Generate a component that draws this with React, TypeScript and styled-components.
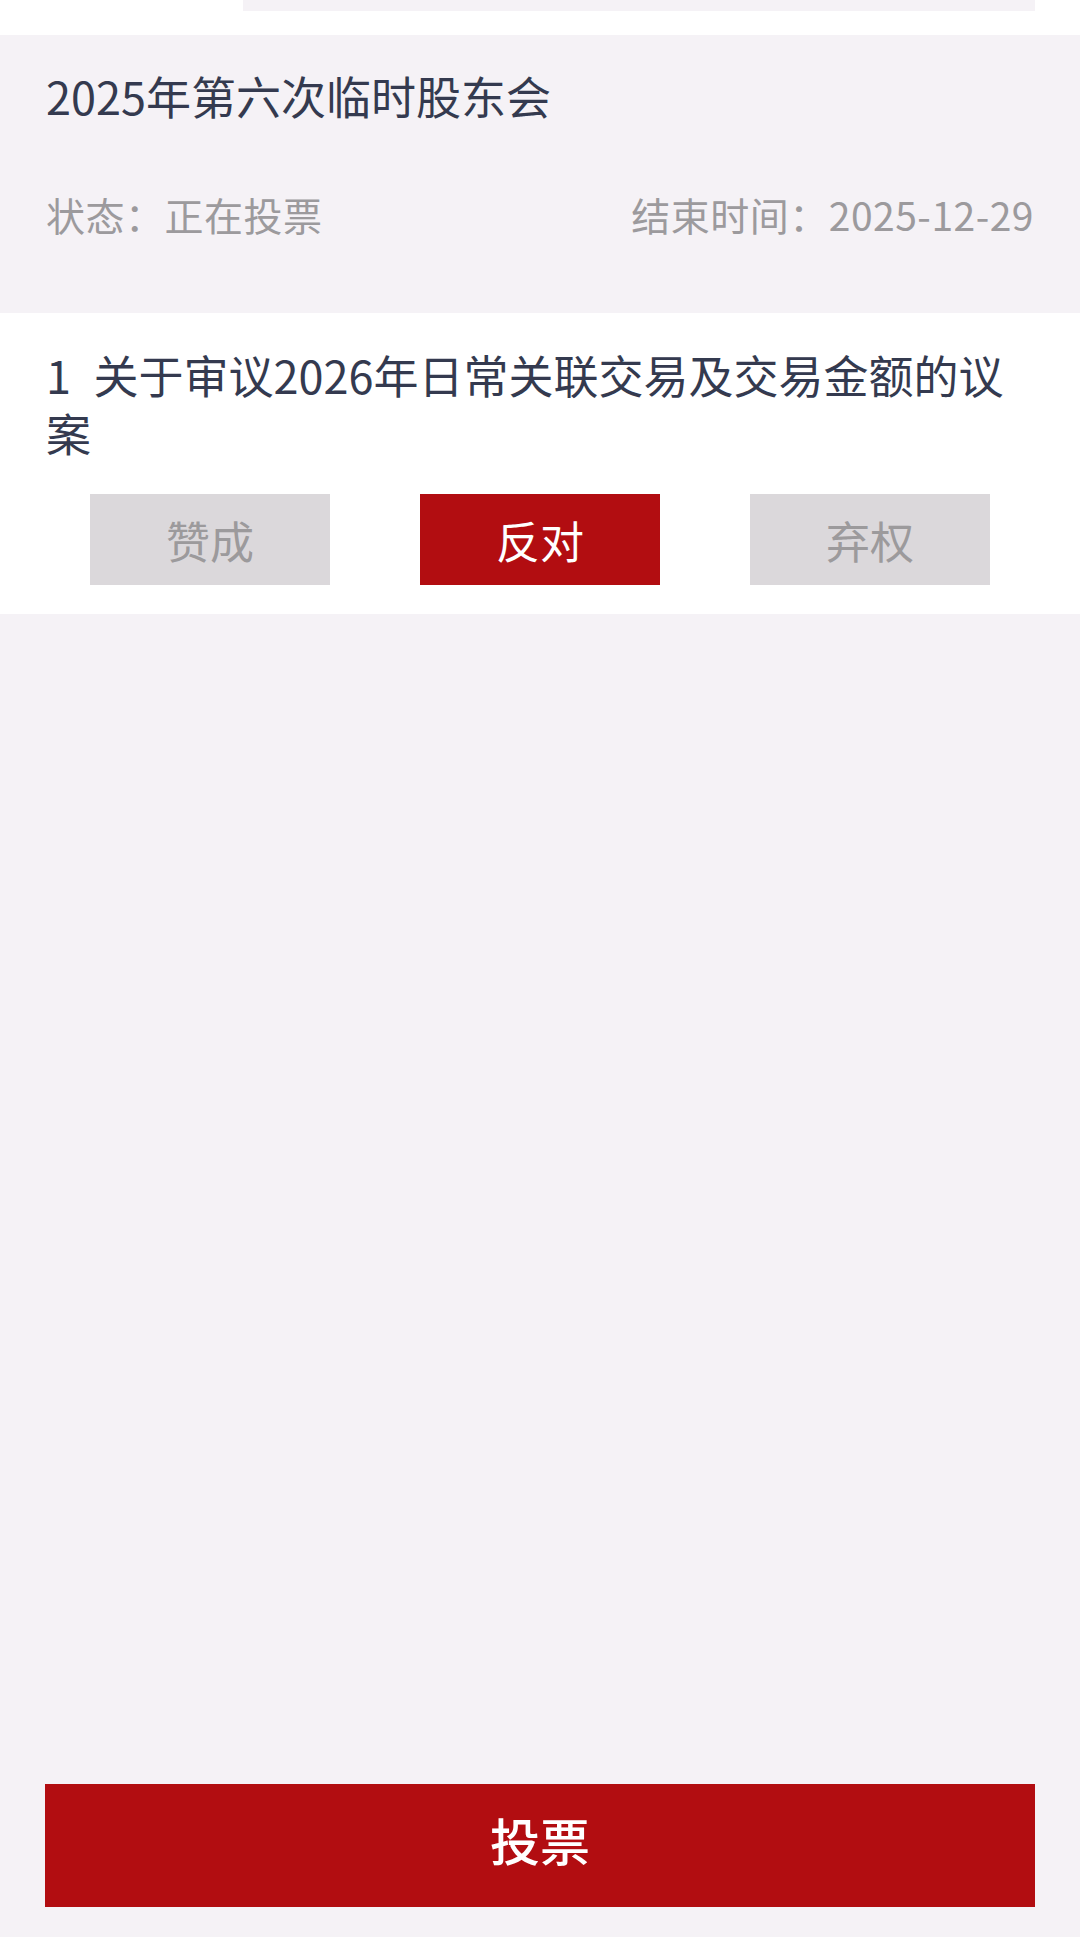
import React, { useState } from "react";
import styled, { createGlobalStyle } from "styled-components";

const GlobalStyle = createGlobalStyle`
  body {
    margin: 0;
    background: #f5f2f6;
    font-family: "Noto Sans CJK SC", "Noto Sans", sans-serif;
  }
`;

type Choice = "agree" | "against" | "abstain";

const options: { key: Choice; label: string }[] = [
  { key: "agree", label: "赞成" },
  { key: "against", label: "反对" },
  { key: "abstain", label: "弃权" },
];

const App = () => {
  const [choice, setChoice] = useState<Choice>("against");

  return (
    <Page>
      <GlobalStyle />
      <TopBar>
        <TopBox />
      </TopBar>
      <MeetingCard>
        <Title>2025年第六次临时股东会</Title>
        <StatusRow>
          <span>状态：正在投票</span>
          <span>结束时间：2025-12-29</span>
        </StatusRow>
      </MeetingCard>
      <Proposal>
        <ProposalText>
          {"1\u2002关于审议2026年日常关联交易及交易金额的议案"}
        </ProposalText>
        <OptionRow>
          {options.map((item) => (
            <OptionButton
              key={item.key}
              $active={choice === item.key}
              onClick={() => setChoice(item.key)}
            >
              {item.label}
            </OptionButton>
          ))}
        </OptionRow>
      </Proposal>
      <Footer>
        <VoteButton>投票</VoteButton>
      </Footer>
    </Page>
  );
};

const Page = styled.div`
  min-height: 1937px;
  display: flex;
  flex-direction: column;
  background: #f5f2f6;
`;
const TopBar = styled.div`
  height: 35px;
  background: #ffffff;
  padding: 0 45px 0 243px;
`;
const TopBox = styled.div`
  height: 11px;
  background: #f5f2f6;
`;
const MeetingCard = styled.div`
  padding: 31px 46px 73px;
  background: #f5f2f6;
`;
const Title = styled.div`
  font-size: 45px;
  line-height: 60px;
  color: #343a4f;
`;
const StatusRow = styled.div`
  display: flex;
  justify-content: space-between;
  margin-top: 62px;
  font-size: 39px;
  line-height: 52px;
  letter-spacing: 0.5px;
  color: #9c9a9d;
`;
const Proposal = styled.div`
  background: #ffffff;
  padding: 33px 0 29px;
`;
const ProposalText = styled.div`
  padding: 0 46px;
  font-size: 45px;
  line-height: 58px;
  color: #343a4f;
`;
const OptionRow = styled.div`
  display: flex;
  justify-content: space-evenly;
  margin-top: 32px;
`;
const OptionButton = styled.button<{ $active: boolean }>`
  width: 240px;
  height: 91px;
  border: none;
  border-radius: 0;
  padding: 0;
  font-family: inherit;
  font-size: 44px;
  color: ${(p) => (p.$active ? "#ffffff" : "#9c9a9c")};
  background: ${(p) => (p.$active ? "#b20d11" : "#dbd8db")};
`;
const Footer = styled.div`
  margin-top: auto;
  padding: 0 45px 30px;
`;
const VoteButton = styled.button`
  width: 100%;
  height: 123px;
  border: none;
  border-radius: 0;
  padding: 0 0 14px;
  font-family: inherit;
  font-size: 50px;
  font-weight: 500;
  color: #ffffff;
  background: #b20d11;
`;

export default App;
